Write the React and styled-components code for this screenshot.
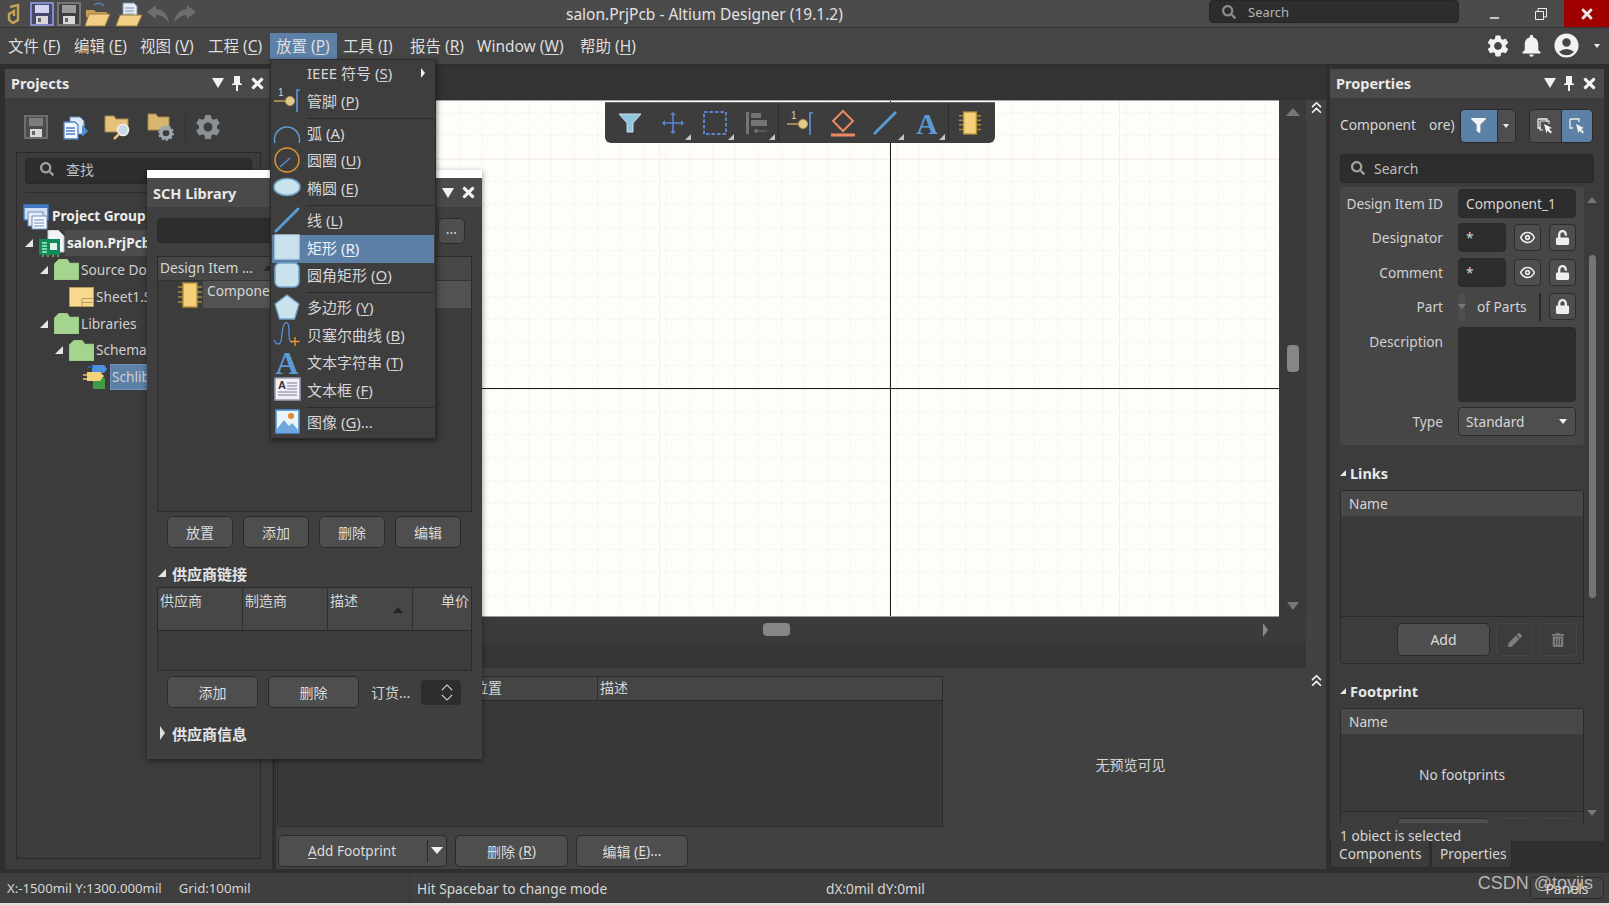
import React from "react";
import styled, { createGlobalStyle } from "styled-components";
import { FaSearch, FaLock, FaUnlock, FaTimes, FaPen, FaTrashAlt, FaFilter } from "react-icons/fa";
import { MdSettings, MdNotifications, MdAccountCircle } from "react-icons/md";
import { FiChevronsUp, FiEye } from "react-icons/fi";

const GlobalStyle = createGlobalStyle`
  html, body {
    margin: 0;
    padding: 0;
    background: #dcdcdc;
    overflow: hidden;
  }
  body {
    font-family: "Noto Sans", "Noto Sans CJK SC", sans-serif;
    font-size: 14px;
    color: #d6d6d6;
  }
  * { box-sizing: border-box; }
  u { text-underline-offset: 2px; }
`;

const App_ = styled.div`
  position: relative;
  width: 1609px;
  height: 903px;
  display: flex;
  flex-direction: column;
  background: #2f2f2f;
  overflow: hidden;
`;

/* ---- title bar ---- */
const TitleBar = styled.header`
  height: 28px;
  display: flex;
  align-items: center;
  background: #4b4b4b;
  border-bottom: 1px solid #353535;
  position: relative;
`;
const QuickIcons = styled.div`
  display: flex;
  align-items: center;
  gap: 3px;
  padding-left: 7px;
  width: 566px;
`;
const AppTitle = styled.div`
  width: 643px;
  font-size: 15.5px;
  color: #e2e2e2;
`;
const TitleSearch = styled.div`
  width: 250px;
  height: 23px;
  margin-bottom: 4px;
  display: flex;
  align-items: center;
  gap: 12px;
  padding-left: 12px;
  background: #2d2d2d;
  border: 1px solid #262626;
  border-radius: 4px;
  color: #b5b5b5;
  font-size: 13px;
`;
const WinButton = styled.div`
  width: ${(p) => p.$w}px;
  height: 27px;
  display: flex;
  align-items: center;
  justify-content: center;
  background: ${(p) => p.$bg || "transparent"};
  color: #e8e8e8;
`;
const WinControls = styled.div`
  margin-left: auto;
  display: flex;
`;

/* ---- menu bar ---- */
const MenuBar = styled.nav`
  height: 37px;
  display: flex;
  align-items: center;
  padding-left: 8px;
  background: #454545;
  border-bottom: 1px solid #2d2d2d;
`;
const MenuItem = styled.div`
  width: ${(p) => p.$w}px;
  height: 26px;
  margin-right: ${(p) => (p.$active ? 6 : 0)}px;
  padding: 0 ${(p) => (p.$active ? 6 : 0)}px;
  display: flex;
  align-items: center;
  font-size: 15.5px;
  white-space: nowrap;
  color: #dedede;
  background: ${(p) => (p.$active ? "#5d80a6" : "transparent")};
`;
const MenuRight = styled.div`
  margin-left: auto;
  display: flex;
  align-items: center;
  gap: 7px;
  padding-right: 9px;
  color: #f2f2f2;
`;
const CaretGap = styled.span`
  display: flex;
  margin-left: 6px;
`;

/* ---- small shared shapes ---- */
const Tri = styled.span`
  display: inline-block;
  width: 0;
  height: 0;
  flex: none;
  border-style: solid;
  border-color: transparent;
  ${(p) =>
    p.$dir === "down"
      ? `border-width: ${p.$s}px ${p.$w || p.$s * 0.85}px 0; border-top-color: ${p.$c || "#eee"};`
      : p.$dir === "up"
      ? `border-width: 0 ${p.$s * 0.9}px ${p.$s}px; border-bottom-color: ${p.$c || "#777"};`
      : p.$dir === "right"
      ? `border-width: ${p.$s}px 0 ${p.$s}px ${p.$s * 0.8}px; border-left-color: ${p.$c || "#ddd"};`
      : `border-width: 0 0 ${p.$s}px ${p.$s}px; border-bottom-color: ${p.$c || "#e6e6e6"};`}
`;
const IconGap = styled.span`
  display: flex;
  flex: none;
  margin-right: ${(p) => p.$m}px;
`;

/* ---- workspace ---- */
const Workspace = styled.main`
  height: 806px;
  display: flex;
  background: #2f2f2f;
`;
const Panel = styled.section`
  display: flex;
  flex-direction: column;
  background: #3c3c3c;
`;
const PanelHead = styled.div`
  flex: none;
  height: 29px;
  display: flex;
  align-items: center;
  padding: 0 ${(p) => p.$pr || 6}px 0 6px;
  background: #4a4a4a;
  font-size: 14.5px;
  font-weight: 700;
  color: #e8e8e8;
`;
const HeadIcons = styled.div`
  margin-left: auto;
  display: flex;
  align-items: center;
  gap: 6.5px;
  color: #f4f4f4;
`;

/* left dock */
const LeftDock = styled(Panel)`
  width: 267px;
  margin: 4px 4px 1px 5px;
`;
const DockTools = styled.div`
  height: 54px;
  display: flex;
  align-items: center;
  gap: 15px;
  padding: 5px 0 0 19px;
`;
const ToolSep = styled.span`
  width: 1px;
  height: 27px;
  margin: 0 -8px 0 -5px;
  background: #2f2f2f;
`;
const TreeBox = styled.div`
  margin: 0 11px 10px;
  height: 707px;
  padding: 5px 8px;
  border: 1px solid #2a2a2a;
  overflow: hidden;
`;
const SearchField = styled.div`
  height: ${(p) => p.$h || 26}px;
  display: flex;
  align-items: center;
  gap: 12px;
  padding: 0 0 3px 14px;
  background: #2d2d2d;
  border: 1px solid #282828;
  border-radius: 4px;
  color: #bdbdbd;
  font-size: 14px;
`;
const TreeRule = styled.div`
  height: 1px;
  margin-top: 8px;
  margin-bottom: 10px;
  background: #2c2c2c;
`;
const TreeList = styled.div`
  margin: 0 -8px;
`;
const TreeRow = styled.div`
  height: 26.8px;
  display: flex;
  align-items: center;
  padding-left: ${(p) => p.$indent}px;
  white-space: nowrap;
  font-size: 13.7px;
`;
const TreeArrow = styled.span`
  width: 14px;
  display: flex;
`;
const TreeLabel = styled.span`
  height: 26px;
  line-height: 24px;
  padding: 0 1px;
  font-weight: ${(p) => (p.$bold ? 700 : 400)};
  color: ${(p) => (p.$bold ? "#eee" : "#cfcfcf")};
  background: ${(p) => p.$bg || "transparent"};
  border: 1px solid ${(p) => p.$line || "transparent"};
`;

/* center */
const Center = styled.div`
  width: 1050px;
  display: flex;
  flex-direction: column;
`;
const DocStrip = styled.div`
  height: 35px;
  background: #333;
`;
const DocArea = styled.div`
  display: flex;
`;
const DocStack = styled.div`
  width: 1030px;
`;
const CanvasRow = styled.div`
  height: 517px;
  display: flex;
`;
const Canvas = styled.div`
  position: relative;
  width: 1003px;
  background: #fffdf9;
  border-top: 1px solid #aaa;
  border-bottom: 1px solid #999;
  overflow: hidden;
`;
const GridArt = styled.svg`
  display: block;
  width: 100%;
  height: 100%;
`;
const CanvasBar = styled.div`
  position: absolute;
  left: 329px;
  top: 1px;
  width: 390px;
  height: 41px;
  display: flex;
  align-items: center;
  padding-left: 4px;
  background: #3d3d3d;
  border-radius: 0 0 6px 6px;
  border-top: 1px solid #666;
`;
const Tool = styled.div`
  position: relative;
  width: 42.5px;
  height: 36px;
  display: flex;
  align-items: center;
  justify-content: center;
  border-right: ${(p) => (p.$sep ? "1px solid #2b2b2b" : "none")};
  ${(p) =>
    p.$corner
      ? `&::after {
          content: "";
          position: absolute;
          right: 3px;
          bottom: 1px;
          border-style: solid;
          border-width: 0 0 6px 6px;
          border-color: transparent transparent #c4c4c4 transparent;
        }`
      : ""}
`;
const VScroll = styled.div`
  width: 27px;
  padding: 8px 0 7px;
  display: flex;
  flex-direction: column;
  align-items: center;
  background: #3a3a3a;
`;
const HScroll = styled.div`
  height: 26px;
  display: flex;
  align-items: center;
  padding: 0 38px 0 487px;
  background: #3b3b3b;
  justify-content: space-between;
`;
const ScrollThumb = styled.div`
  background: #868686;
  border-radius: 4px;
  ${(p) => (p.$h ? `width: 12px; height: 27px; margin-top: ${p.$top}px; margin-bottom: auto;` : "width: 27px; height: 13px;")}
`;
const Splitter = styled.div`
  height: 25px;
  background: #363636;
`;
const Rail = styled.div`
  width: 20px;
  display: flex;
  justify-content: center;
  color: #f2f2f2;
  background: #424242;
  svg {
    margin-top: -2px;
  }
`;
const BottomPanel = styled.div`
  height: 201px;
  display: grid;
  grid-template-columns: 667px 1fr 20px;
  grid-template-rows: 166px 1fr;
  background: #414141;
`;
const ModelTable = styled.div`
  margin: 8px 0 7px 1px;
  display: flex;
  flex-direction: column;
  background: #393939;
  border: 1px solid #2b2b2b;
`;
const ModelHead = styled.div`
  height: 24px;
  display: grid;
  grid-template-columns: 193px 126px 1fr;
  align-items: center;
  background: #454545;
  border-bottom: 1px solid #2a2a2a;
  font-size: 14px;
`;
const HeadCell = styled.span`
  height: 100%;
  padding-left: 2px;
  line-height: 22px;
  border-left: ${(p) => (p.$first ? "none" : "1px solid #2f2f2f")};
`;
const Preview = styled.div`
  display: flex;
  align-items: center;
  justify-content: center;
  padding: 26px 0 0 12px;
  font-size: 14px;
`;
const BottomRail = styled(Rail)`
  grid-row: 1 / 3;
  grid-column: 3;
  padding-top: 5px;
  background: transparent;
`;
const ModelButtons = styled.div`
  display: flex;
  gap: 8px;
  padding: 1px 0 0 2px;
`;
const Btn = styled.div`
  width: ${(p) => p.$w}px;
  height: ${(p) => p.$h || 32}px;
  display: flex;
  align-items: center;
  justify-content: center;
  flex: none;
  background: ${(p) => (p.$off ? "transparent" : "#4e4e4e")};
  border: 1px solid ${(p) => (p.$off ? "#464646" : "#2a2a2a")};
  border-radius: 5px;
  color: ${(p) => (p.$off ? "#7c7c7c" : "#dcdcdc")};
  font-size: 14px;
  white-space: nowrap;
`;
const SplitBtn = styled(Btn)`
  justify-content: flex-start;
  padding-left: 29px;
  font-size: 13.6px;
`;
const SplitCaret = styled.span`
  width: 19px;
  height: 22px;
  margin-left: auto;
  padding-left: 3px;
  display: flex;
  align-items: center;
  border-left: 1px solid #2a2a2a;
`;

/* right dock */
const RightDock = styled.aside`
  width: 283px;
  padding: 4px 5px 0 4px;
  display: flex;
  flex-direction: column;
`;
const PropsPanel = styled(Panel)`
  height: 772px;
  overflow: hidden;
`;
const PropsTop = styled.div`
  height: 45px;
  display: flex;
  align-items: flex-end;
  padding: 0 11px 0 10px;
`;
const PropsName = styled.div`
  width: 121px;
  height: 34px;
  padding-bottom: 2px;
  display: flex;
  align-items: center;
  font-size: 13.7px;
`;
const PropsGap = styled.span`
  display: inline-block;
  width: 13px;
`;
const SegGroup = styled.div`
  height: 34px;
  display: flex;
  margin-right: ${(p) => p.$mr || 0}px;
  border: 1px solid #2a2a2a;
  border-radius: 5px;
  overflow: hidden;
`;
const Seg = styled.div`
  width: ${(p) => p.$w}px;
  display: flex;
  align-items: center;
  justify-content: center;
  color: #f4f4f4;
  background: ${(p) => (p.$on ? "#5d80a6" : "#4e4e4e")};
  border-left: ${(p) => (p.$line ? "1px solid #2d2d2d" : "none")};
`;
const PropsSearch = styled(SearchField)`
  margin: 11px 10px 4px;
  height: 29px;
  padding: 0 0 0 10px;
  gap: 9px;
`;
const PropsScroll = styled.div`
  height: 636px;
  display: flex;
  overflow: hidden;
`;
const PropsContent = styled.div`
  width: 254px;
  padding-left: 10px;
  flex: none;
`;
const FormArea = styled.div`
  padding: 2px 8px 9px 0;
  display: grid;
  grid-template-columns: 103px minmax(0, 1fr);
  column-gap: 15px;
  row-gap: 5.5px;
  background: #464646;
  border-radius: 4px;
`;
const FormLabel = styled.label`
  height: 29px;
  line-height: 29px;
  text-align: right;
  font-size: 13.7px;
  color: #d2d2d2;
`;
const FormControls = styled.div`
  height: ${(p) => p.$h || 29}px;
  display: flex;
  align-items: center;
  gap: ${(p) => (p.$tight ? 0 : 8)}px;
`;
const Field = styled.div`
  flex: ${(p) => (p.$w ? `0 0 ${p.$w}px` : 1)};
  height: 100%;
  padding-left: 7px;
  line-height: 27px;
  background: #2d2d2d;
  border: 1px solid #2a2a2a;
  border-radius: 4px;
  font-size: 13.7px;
`;
const IconBtn = styled.div`
  flex: none;
  width: 27px;
  height: 27px;
  display: flex;
  align-items: center;
  justify-content: center;
  background: #4e4e4e;
  border: 1px solid #2d2d2d;
  border-radius: 4px;
  color: #eee;
`;
const PartStub = styled.div`
  width: 7px;
  height: 28px;
  flex: none;
  margin-right: 12px;
  display: flex;
  align-items: center;
  justify-content: center;
  background: #4e4e4e;
  border-radius: 3px 0 0 3px;
`;
const PartText = styled.span`
  width: 62px;
  flex: none;
  font-size: 13.7px;
  color: #d2d2d2;
  white-space: nowrap;
`;
const PartBar = styled.span`
  width: 2px;
  height: 28px;
  flex: none;
  margin-right: 8px;
  background: #2a2a2a;
`;
const SelectBox = styled.div`
  flex: 1;
  height: 100%;
  padding: 0 8px 1px 7px;
  display: flex;
  align-items: center;
  justify-content: space-between;
  background: #4e4e4e;
  border: 1px solid #2c2c2c;
  border-radius: 4px;
  font-size: 13.7px;
`;
const SectionHead = styled.div`
  height: ${(p) => p.$h}px;
  display: flex;
  align-items: center;
  gap: 4px;
  margin-top: ${(p) => p.$mt}px;
  font-size: 14.5px;
  font-weight: 700;
  color: #e8e8e8;
`;
const DataTable = styled.div`
  width: 244px;
  height: ${(p) => p.$h}px;
  margin-top: 6px;
  display: flex;
  flex-direction: column;
  border: 1px solid #2a2a2a;
  border-radius: 3px;
  background: #3a3a3a;
`;
const DataHead = styled.div`
  height: 25px;
  flex: none;
  padding-left: 8px;
  line-height: 25px;
  background: #484848;
  font-size: 13.7px;
`;
const DataBody = styled.div`
  height: ${(p) => p.$h}px;
  flex: none;
  padding-top: 3px;
  display: flex;
  align-items: center;
  justify-content: center;
  border-bottom: 1px solid #2a2a2a;
  font-size: 13.7px;
`;
const DataFoot = styled.div`
  flex: 1;
  display: flex;
  gap: 6px;
  padding: 6px 0 0 56px;
  background: #3c3c3c;
`;
const PropTrack = styled.div`
  width: 16px;
  display: flex;
  flex-direction: column;
  align-items: center;
  padding: 10px 0 7px;
`;
const PropThumb = styled.div`
  width: 7px;
  height: 343px;
  margin: 52px 0 auto;
  background: #757575;
  border-radius: 4px;
`;
const PropsFoot = styled.div`
  height: 18px;
  padding-left: 10px;
  line-height: 25px;
  font-size: 13.7px;
  overflow: hidden;
  white-space: nowrap;
`;
const TabRow = styled.div`
  display: flex;
  gap: 1px;
`;
const DockTab = styled.div`
  width: ${(p) => p.$w}px;
  height: 27px;
  padding-left: 8px;
  line-height: 25px;
  background: #3c3c3c;
  border: 1px solid #2b2b2b;
  border-top: none;
  border-radius: 0 0 4px 4px;
  font-size: 13.7px;
`;

/* status bar */
const StatusBar = styled.footer`
  margin-top: 3px;
  height: 30px;
  display: flex;
  align-items: center;
  background: #3f3f3f;
  font-size: 13.7px;
  position: relative;
`;
const StatusCell = styled.div`
  width: ${(p) => p.$w}px;
  height: 100%;
  flex: none;
  padding-left: 7px;
  line-height: 31px;
  font-size: ${(p) => p.$fs || 13.7}px;
  border-right: ${(p) => (p.$line ? "1px solid #363636" : "none")};
  white-space: nowrap;
`;
const GridText = styled.span`
  margin-left: 17px;
`;
const PanelsBtn = styled(Btn)`
  margin-left: auto;
  margin-right: 5px;
  width: 74px;
  height: 22px;
  background: #444;
`;
const Watermark = styled.div`
  position: absolute;
  right: 16px;
  top: 0;
  color: rgba(205, 205, 205, 0.85);
  font-family: "Liberation Sans", sans-serif;
  font-size: 18px;
`;

/* SCH Library float */
const Floater = styled.div`
  position: absolute;
  left: 147px;
  top: 170px;
  width: 335px;
  height: 589px;
  display: flex;
  flex-direction: column;
  background: #3f3f3f;
  border-top: 8px solid #fff;
  box-shadow: 0 2px 6px rgba(0, 0, 0, 0.45);
`;
const FloatBody = styled.div`
  padding: 11px 10px 0;
  display: flex;
  flex-direction: column;
`;
const FilterRow = styled.div`
  display: flex;
  gap: 6px;
`;
const FilterInput = styled.div`
  width: 275px;
  height: 25px;
  background: #2d2d2d;
  border: 1px solid #2a2a2a;
  border-radius: 4px;
`;
const DotsBtn = styled(Btn)`
  width: 27px;
  height: 26px;
  padding-bottom: 5px;
`;
const CompTable = styled.div`
  height: 256px;
  margin-top: 12px;
  border: 1px solid #2b2b2b;
  background: #3c3c3c;
`;
const CompHead = styled.div`
  height: 24px;
  display: flex;
  align-items: center;
  padding: 0 0 2px 2px;
  gap: 10px;
  background: #474747;
  border-bottom: 1px solid #333;
  font-size: 13.7px;
`;
const CompRow = styled.div`
  height: 27px;
  display: flex;
  align-items: center;
  padding-left: 20px;
`;
const CompName = styled.span`
  flex: 1;
  height: 100%;
  margin-left: 1px;
  padding-left: 4px;
  line-height: 20px;
  background: #525252;
  font-size: 13.7px;
`;
const ButtonRow = styled.div`
  display: flex;
  align-items: center;
  gap: ${(p) => p.$gap || 10}px;
  margin-top: ${(p) => p.$mt || 5}px;
  padding-left: 10px;
`;
const FloatSection = styled.div`
  height: 22px;
  display: flex;
  align-items: center;
  gap: ${(p) => p.$gap || 6}px;
  margin-top: ${(p) => p.$mt}px;
  padding-left: ${(p) => p.$pl || 1}px;
  font-size: 15px;
  font-weight: 700;
  color: #e4e4e4;
`;
const VendorTable = styled.div`
  height: 84px;
  margin-top: 3px;
  border: 1px solid #2b2b2b;
  background: #3c3c3c;
`;
const VendorHead = styled.div`
  height: 43px;
  display: grid;
  grid-template-columns: 84px 85px 85px 1fr;
  background: #474747;
  border-bottom: 1px solid #2b2b2b;
`;
const VendorCell = styled.div`
  position: relative;
  padding: 2px 2px 0;
  font-size: 14px;
  line-height: 22px;
  text-align: ${(p) => p.$align || "left"};
  border-left: ${(p) => (p.$first ? "none" : "1px solid #303030")};
`;
const SortMark = styled.span`
  position: absolute;
  right: 9px;
  bottom: 17px;
  display: flex;
`;
const OrderLabel = styled.span`
  margin-left: 2px;
  font-size: 14px;
`;
const Stepper = styled.div`
  width: 40px;
  height: 25px;
  padding-left: 12px;
  display: flex;
  flex-direction: column;
  align-items: center;
  justify-content: center;
  gap: 3px;
  background: #2d2d2d;
  border-radius: 4px;
  margin-left: 1px;
`;

/* place menu */
const PlaceMenu = styled.div`
  position: absolute;
  left: 270px;
  top: 59px;
  width: 166px;
  padding: 1px;
  background: #3e3e3e;
  border: 1px solid #2b2b2b;
  box-shadow: 1px 2px 5px rgba(0, 0, 0, 0.5);
`;
const MenuRow = styled.div`
  height: 27.5px;
  padding-bottom: 4px;
  display: flex;
  align-items: center;
  font-size: 15px;
  white-space: nowrap;
  color: ${(p) => (p.$active ? "#eef2f6" : "#d6d6d6")};
  background: ${(p) => (p.$active ? "#5d80a6" : "transparent")};
`;
const MenuIcon = styled.span`
  width: 30px;
  height: 27px;
  margin-right: 5px;
  flex: none;
  display: flex;
  align-items: center;
  justify-content: center;
`;
const MenuSep = styled.div`
  height: 4.7px;
  display: flex;
  align-items: center;
  padding-left: 34px;
  &::after {
    content: "";
    flex: 1;
    height: 1px;
    background: #2b2b2b;
  }
`;
const SubArrow = styled.span`
  margin-left: 29px;
  display: flex;
`;

/* ---- drawings ---- */
const Floppy = ({ c = "#8f8f8f", hi = "#4a4a4a", top = "#9a9a9a", s = 24 }) => (
  <svg width={s} height={s} viewBox="0 0 24 24">
    <rect x="1" y="1" width="22" height="22" fill={hi} stroke={c} strokeWidth="1.8" />
    <rect x="5" y="3" width="14" height="8" fill={top} />
    <rect x="6" y="14" width="12" height="8" fill="#d8d8d8" />
    <rect x="8" y="16" width="3" height="4" fill="#666" />
  </svg>
);
const OpenFolder = () => (
  <svg width="27" height="26" viewBox="0 0 27 26">
    <path d="M2 9h8l2 2h11v5H2z" fill="#c59f55" />
    <path d="M1 25 5 13h21l-5 12z" fill="#f2cf86" stroke="#9a7b3d" />
    <path d="M10 4q6-4 10 1" fill="none" stroke="#5d80c6" strokeWidth="1.5" />
  </svg>
);
const DocFolder = () => (
  <svg width="28" height="26" viewBox="0 0 28 26">
    <path d="M8 2h11l3 3v12H8z" fill="#e8edf5" stroke="#7d8fb0" />
    <path d="M10 7h9M10 10h9M10 13h9" stroke="#7d8fb0" />
    <path d="M1 25 5 14h22l-5 11z" fill="#f2cf86" stroke="#9a7b3d" />
  </svg>
);
const Logo = () => (
  <svg width="14" height="22" viewBox="0 0 14 22">
    <path d="M3 4 11 2v15l-5 3-4-3V11l5-3v5" fill="none" stroke="#c6a253" strokeWidth="2.4" />
  </svg>
);
const UndoSvg = styled.svg`
  transform: ${(p) => (p.$flip ? "scaleX(-1)" : "none")};
`;
const UndoArrow = ({ flip }) => (
  <UndoSvg width="24" height="22" viewBox="0 0 24 22" $flip={flip}>
    <path d="M1 9 10 2v4q11 1 13 14Q18 12 10 12v4z" fill="#6e6e6e" />
  </UndoSvg>
);
const SmallPin = () => (
  <svg width="12" height="15" viewBox="0 0 12 15">
    <path d="M3 0h6v7l2 1v1H7v6H5V9H1V8l2-1z" fill="#f2f2f2" />
  </svg>
);
const GreenFolder = () => (
  <svg width="25" height="21" viewBox="0 0 25 21">
    <path d="M0 5 5 0h8l3 4h9v17H0z" fill="#a5d48f" stroke="#8ab478" strokeWidth=".6" />
  </svg>
);
const CopyDocs = () => (
  <svg width="26" height="26" viewBox="0 0 26 26">
    <path d="M7 3h10l4 4v13H7z" fill="#dfe9f5" stroke="#5e8ac4" />
    <path d="M1 8h11l3 3v14H1z" fill="#f2f6fb" stroke="#4f80c0" strokeWidth="1.3" />
    <path d="M3 14h9M3 17h9M3 20h9" stroke="#4f80c0" strokeWidth="1.4" />
    <path d="M19 11v12l6-6z" fill="#4f8fd8" />
  </svg>
);
const FolderSearch = () => (
  <svg width="28" height="28" viewBox="0 0 28 28">
    <path d="M1 3h9l2 3h12v13H1z" fill="#e7c27b" stroke="#a5864a" />
    <circle cx="19" cy="17" r="5.5" fill="#c8d9e6" stroke="#eee" strokeWidth="1.6" />
    <path d="m15 21-5 5" stroke="#e7c27b" strokeWidth="2.5" />
  </svg>
);
const FolderGear = () => (
  <svg width="28" height="28" viewBox="0 0 28 28">
    <path d="M1 1h8l2 3h11v13H1z" fill="#d9b670" stroke="#a5864a" />
    <circle cx="19" cy="20" r="5" fill="none" stroke="#9aa7ae" strokeWidth="3.4" />
    <circle cx="19" cy="20" r="7" fill="none" stroke="#9aa7ae" strokeWidth="1.8" strokeDasharray="2.2 2.2" />
  </svg>
);
const ProjectGroup = () => (
  <svg width="27" height="27" viewBox="0 0 27 27">
    <path d="M1 2h24v15H1z" fill="#cfe0f3" stroke="#3f78c4" strokeWidth="1.4" />
    <path d="M1 2h24v3H1z" fill="#3f78c4" />
    <path d="M5 9h15v14H5z" fill="#e6edf6" stroke="#6d8fb8" />
    <path d="M9 13h15v13H9z" fill="#f4f7fb" stroke="#6d8fb8" />
    <path d="M11 17h10M11 20h10M11 23h10" stroke="#6d8fb8" />
  </svg>
);
const PcbProject = () => (
  <svg width="26" height="27" viewBox="0 0 26 27">
    <path d="M9 0h10l6 6v16H9z" fill="#f0f3f8" stroke="#b8c0cc" />
    <rect x="0" y="9" width="21" height="16" fill="#0e8a5b" />
    <path d="M3 13h5M3 16h5M3 19h5M3 22h5" stroke="#a8f0c8" strokeWidth="1.5" />
    <rect x="11" y="13" width="7" height="7" fill="#dff5e8" />
    <path d="M4 25v2M9 25v2M14 25v2M19 25v2" stroke="#e8d27a" />
  </svg>
);
const SheetIcon = () => (
  <svg width="25" height="20" viewBox="0 0 25 20">
    <rect x="0.5" y="0.5" width="24" height="19" fill="#f6d98f" stroke="#b99a56" />
    <path d="M13 19.5v-8h11.5M13 15.5h11" stroke="#b99a56" fill="none" />
  </svg>
);
const SchLibIcon = () => (
  <IconGap $m={3}>
    <svg width="24" height="26" viewBox="0 0 24 26">
      <rect x="10" y="14" width="12" height="11" fill="#3e9a45" />
      <path d="M9 1h12l3 4-3 4H9z" fill="#4f8fe0" />
      <path d="M5 3h5" stroke="#2b5a9a" strokeWidth="2" />
      <path d="M4 8h13l4 4-4 5H4z" fill="#f3d27c" />
      <path d="M0 11h4M0 15h4" stroke="#c6a253" strokeWidth="2" />
    </svg>
  </IconGap>
);
const Chip = ({ w = 24, h = 26 }) => (
  <svg width={w} height={h} viewBox="0 0 24 26">
    <path d="M0 5h24M0 10h24M0 15h24M0 20h24" stroke="#a08a3a" strokeWidth="1.6" />
    <rect x="5" y="1" width="14" height="24" fill="#f6cf78" stroke="#b18f3d" strokeWidth="1.4" />
  </svg>
);
const PinIcon = () => (
  <svg width="28" height="28" viewBox="0 0 28 28">
    <text x="5" y="10" fontFamily="Liberation Sans, sans-serif" fontSize="10" fill="#d0d0d0">1</text>
    <path d="M1 15h14" stroke="#b89a58" strokeWidth="1.6" />
    <circle cx="17" cy="15" r="4.6" fill="#e3c98c" stroke="#b2935a" />
    <path d="M27 4h-3v22" fill="none" stroke="#5b8fd8" strokeWidth="1.7" />
  </svg>
);
const ArcIcon = () => (
  <svg width="28" height="28" viewBox="0 0 28 28">
    <path d="M2 25a12.5 12.5 0 1 1 24 0" fill="none" stroke="#5b9bd5" strokeWidth="1.5" />
  </svg>
);
const RingIcon = () => (
  <svg width="28" height="28" viewBox="0 0 28 28">
    <circle cx="14" cy="14" r="12" fill="none" stroke="#e8962e" strokeWidth="1.4" />
    <path d="M7 21 17 12" stroke="#5b8fd8" strokeWidth="1.2" />
  </svg>
);
const EllipseIcon = () => (
  <svg width="28" height="20" viewBox="0 0 28 20">
    <ellipse cx="14" cy="10" rx="13" ry="8.5" fill="#c9e2ec" stroke="#6fa3c8" strokeWidth="1.6" />
  </svg>
);
const LineIcon = ({ s = 28 }) => (
  <svg width={s} height={s} viewBox="0 0 28 28">
    <path d="M3 25 25 3" stroke="#5b9bd5" strokeWidth="3" strokeLinecap="round" />
  </svg>
);
const RectIcon = () => (
  <svg width="26" height="26" viewBox="0 0 26 26">
    <rect x="1" y="1" width="24" height="24" fill="#c9e2ec" stroke="#bcd6e2" strokeWidth="1.4" />
  </svg>
);
const RoundRectIcon = () => (
  <svg width="26" height="26" viewBox="0 0 26 26">
    <rect x="1" y="1" width="24" height="24" rx="5" fill="#c9e2ec" stroke="#6fa3c8" strokeWidth="1.6" />
  </svg>
);
const PentaIcon = () => (
  <svg width="26" height="26" viewBox="0 0 26 26">
    <path d="M13 1 25 10l-4.500 15h-15L1 10z" fill="#c9e2ec" stroke="#6fa3c8" strokeWidth="1.3" />
  </svg>
);
const BezierIcon = () => (
  <svg width="28" height="28" viewBox="0 0 28 28">
    <path d="M1 20q3 6 6 3c3-3 1-17 5-20 4-2 4 5 4 10 0 6 1 10 3 9" fill="none" stroke="#5b8fd8" strokeWidth="1.3" />
    <path d="M22 17v9M17.500 21.500h9" stroke="#e8962e" strokeWidth="1.4" />
  </svg>
);
const BigA = ({ s = 30 }) => (
  <svg width={s} height={s} viewBox="0 0 30 30">
    <text x="15" y="27" textAnchor="middle" fontFamily="Liberation Serif, serif" fontWeight="700" fontSize="32" fill="#5b9bd5">A</text>
  </svg>
);
const TextFrameIcon = () => (
  <svg width="27" height="24" viewBox="0 0 27 24">
    <rect x="1" y="1" width="25" height="22" fill="#f1f1f7" stroke="#9a9ab8" strokeWidth="1.5" />
    <text x="4" y="12" fontFamily="Liberation Sans, sans-serif" fontSize="11" fontWeight="700" fill="#333">A</text>
    <path d="M13 6h10M13 9h10M13 12h10M4 15h19M4 18h19" stroke="#7a7a9a" />
  </svg>
);
const PictureIcon = () => (
  <svg width="25" height="25" viewBox="0 0 25 25">
    <rect x="1" y="1" width="23" height="23" fill="#eaf4fb" stroke="#4f8fd8" strokeWidth="1.6" />
    <circle cx="16" cy="7" r="3" fill="#e8862e" />
    <path d="M2 20 9 11l5 6 3-3 7 8v1H2z" fill="#6fa8dc" />
  </svg>
);
const FunnelIcon = () => (
  <svg width="24" height="22" viewBox="0 0 24 22">
    <path d="M1 2h22l-8 9v9H9v-9z" fill="#8fc6dc" stroke="#c6e2ec" strokeWidth="1" />
  </svg>
);
const MoveCross = () => (
  <svg width="24" height="24" viewBox="0 0 24 24">
    <path d="M12 2v20M2 12h20" stroke="#5b84d0" strokeWidth="1.6" />
    <path d="M12 1l-3 3h6zM12 23l-3-3h6zM1 12l3-3v6zM23 12l-3-3v6z" fill="#5b84d0" />
  </svg>
);
const DashRect = () => (
  <svg width="24" height="24" viewBox="0 0 24 24">
    <rect x="1" y="1" width="22" height="22" fill="none" stroke="#5b84d0" strokeWidth="2" strokeDasharray="3.500 2" />
  </svg>
);
const AlignIcon = () => (
  <svg width="24" height="24" viewBox="0 0 24 24">
    <path d="M1 1h3v22H1z" fill="#747474" />
    <path d="M6 2h10v5H6zM6 9h16v6H6z" fill="#747474" />
    <path d="M9 20h13M9 20l3-2v4z" stroke="#747474" fill="#747474" />
  </svg>
);
const EraseIcon = () => (
  <svg width="26" height="28" viewBox="0 0 26 28">
    <path d="M13 2 23 12 13 22 3 12z" fill="none" stroke="#e98a62" strokeWidth="2" />
    <path d="M1 26h24" stroke="#e98a62" strokeWidth="3" />
  </svg>
);
const SelectCursor = ({ both }) => (
  <svg width="16" height="16" viewBox="0 0 16 16">
    <path d="M1 1h9v3M1 1v9h3" fill="none" stroke="#eee" strokeWidth="1.3" />
    {both && <path d="M3 3v9h3M3 3h9v3" fill="none" stroke="#eee" strokeWidth="1.1" />}
    <path d="M7 6 15 10l-3 1 3 3-1.500 1.500-3-3-1 3z" fill="#f2f2f2" />
  </svg>
);
const StepArrow = ({ up }) => (
  <svg width="12" height="7" viewBox="0 0 14 8">
    <path d={up ? "M1 7 7 1l6 6" : "M1 1l6 6 6-6"} fill="none" stroke="#dedede" strokeWidth="1.3" />
  </svg>
);
const CanvasGrid = () => (
  <GridArt>
    <defs>
      <pattern id="minor" width="23" height="23" patternUnits="userSpaceOnUse" x="0" y="12">
        <path d="M22.500 0V23M0 22.500H23" stroke="#f5f2ec" strokeDasharray="2.500 2.500" />
      </pattern>
      <pattern id="major" width="230" height="230" patternUnits="userSpaceOnUse" x="614" y="59">
        <path d="M229.500 0V230M0 229.500H230" stroke="#f3f0ea" />
      </pattern>
    </defs>
    <rect width="100%" height="100%" fill="url(#minor)" />
    <rect width="100%" height="100%" fill="url(#major)" />
    <path d="M614.500 0V517M0 287.500H1003" stroke="#1e1e1e" />
  </GridArt>
);

const MENU = [
  ["文件 (", "F", ")", 66],
  ["编辑 (", "E", ")", 66],
  ["视图 (", "V", ")", 68],
  ["工程 (", "C", ")", 62],
  ["放置 (", "P", ")", 67],
  ["工具 (", "I", ")", 67],
  ["报告 (", "R", ")", 67],
  ["Window (", "W", ")", 103],
  ["帮助 (", "H", ")", 60],
];

const PLACE = [
  [null, "IEEE 符号 (", "S", ")", "sub"],
  [<PinIcon />, "管脚 (", "P", ")", "sep"],
  [<ArcIcon />, "弧 (", "A", ")"],
  [<RingIcon />, "圆圈 (", "U", ")"],
  [<EllipseIcon />, "椭圆 (", "E", ")", "sep"],
  [<LineIcon />, "线 (", "L", ")"],
  [<RectIcon />, "矩形 (", "R", ")", "on"],
  [<RoundRectIcon />, "圆角矩形 (", "O", ")", "sep"],
  [<PentaIcon />, "多边形 (", "Y", ")"],
  [<BezierIcon />, "贝塞尔曲线 (", "B", ")"],
  [<BigA />, "文本字符串 (", "T", ")"],
  [<TextFrameIcon />, "文本框 (", "F", ")", "sep"],
  [<PictureIcon />, "图像 (", "G", ")..."],
];

const TREE = [
  { indent: 6, icon: <ProjectGroup />, label: "Project Group", bold: true },
  { indent: 8, arrow: true, icon: <PcbProject />, label: "salon.PrjPcb", bold: true, bg: "#4d4d4d" },
  { indent: 23, arrow: true, icon: <GreenFolder />, label: "Source Documents" },
  { indent: 52, icon: <SheetIcon />, label: "Sheet1.SchDoc" },
  { indent: 23, arrow: true, icon: <GreenFolder />, label: "Libraries" },
  { indent: 38, arrow: true, icon: <GreenFolder />, label: "Schematic Library" },
  { indent: 66, icon: <SchLibIcon />, label: "Schlib1.SchLib", bg: "#5d80a6", line: "#6d93bb" },
];

function FormSection() {
  return (
    <FormArea>
      <FormLabel>Design Item ID</FormLabel>
      <FormControls><Field>Component_1</Field></FormControls>
      <FormLabel>Designator</FormLabel>
      <FormControls>
        <Field $w={48}>*</Field>
        <IconBtn><FiEye size={15} strokeWidth={2.6} /></IconBtn>
        <IconBtn><FaUnlock size={15} /></IconBtn>
      </FormControls>
      <FormLabel>Comment</FormLabel>
      <FormControls>
        <Field $w={48}>*</Field>
        <IconBtn><FiEye size={15} strokeWidth={2.6} /></IconBtn>
        <IconBtn><FaUnlock size={15} /></IconBtn>
      </FormControls>
      <FormLabel>Part</FormLabel>
      <FormControls $tight>
        <PartStub><Tri $dir="down" $s={5} $w={4} $c="#777" /></PartStub>
        <PartText>of Parts</PartText>
        <PartBar />
        <IconBtn><FaLock size={15} /></IconBtn>
      </FormControls>
      <FormLabel>Description</FormLabel>
      <FormControls $h={75}><Field /></FormControls>
      <FormLabel>Type</FormLabel>
      <FormControls>
        <SelectBox>Standard<Tri $dir="down" $s={5} /></SelectBox>
      </FormControls>
    </FormArea>
  );
}

function PanelTools({ pin = true }) {
  return (
    <HeadIcons>
      <Tri $dir="down" $s={10} $w={6} $c="#f2f2f2" />
      {pin && <SmallPin />}
      <FaTimes size={17} />
    </HeadIcons>
  );
}

export default function App() {
  return (
    <App_>
      <GlobalStyle />
      <TitleBar>
        <QuickIcons>
          <IconGap $m={6}><Logo /></IconGap>
          <Floppy c="#8d92d8" hi="#45476b" top="#d3d5f0" />
          <Floppy c="#7c7c7c" hi="#3f3f3f" />
          <IconGap $m={1}><OpenFolder /></IconGap>
          <DocFolder />
          <UndoArrow />
          <UndoArrow flip />
        </QuickIcons>
        <AppTitle>salon.PrjPcb - Altium Designer (19.1.2)</AppTitle>
        <TitleSearch><FaSearch size={14} color="#8b8b8b" />Search</TitleSearch>
        <WinControls>
          <WinButton $w={46}>
            <svg width="10" height="10" viewBox="0 0 10 10"><path d="M0 9h9" stroke="#eee" strokeWidth="1.5" /></svg>
          </WinButton>
          <WinButton $w={46}>
            <svg width="12" height="12" viewBox="0 0 12 12"><path d="M.5 3.500h8v8h-8zM3 3.500V.5h8.500V9H8.500" fill="none" stroke="#eee" /></svg>
          </WinButton>
          <WinButton $w={45} $bg="#a00000"><FaTimes size={16} /></WinButton>
        </WinControls>
      </TitleBar>

      <MenuBar>
        {MENU.map(([a, k, b, w], i) => (
          <MenuItem key={k} $w={w} $active={i === 4}>
            {a}<u>{k}</u>{b}
          </MenuItem>
        ))}
        <MenuRight>
          <MdSettings size={26} />
          <MdNotifications size={27} />
          <MdAccountCircle size={29} />
          <CaretGap><Tri $dir="down" $s={4} /></CaretGap>
        </MenuRight>
      </MenuBar>

      <Workspace>
        <LeftDock>
          <PanelHead>
            Projects
            <PanelTools />
          </PanelHead>
          <DockTools>
            <Floppy c="#747474" hi="#4c4c4c" top="#7c7c7c" />
            <CopyDocs />
            <FolderSearch />
            <FolderGear />
            <ToolSep />
            <MdSettings size={30} color="#8a9196" />
          </DockTools>
          <TreeBox>
            <SearchField><FaSearch size={14} color="#a0a0a0" />查找</SearchField>
            <TreeRule />
            <TreeList>
              {TREE.map((t) => (
                <TreeRow key={t.label} $indent={t.indent}>
                  {t.arrow && <TreeArrow><Tri $s={8} /></TreeArrow>}
                  {t.icon}
                  <TreeLabel $bold={t.bold} $bg={t.bg} $line={t.line}>{t.label}</TreeLabel>
                </TreeRow>
              ))}
            </TreeList>
          </TreeBox>
        </LeftDock>

        <Center>
          <DocStrip />
          <DocArea>
            <DocStack>
              <CanvasRow>
                <Canvas>
                  <CanvasGrid />
                  <CanvasBar>
                    <Tool><FunnelIcon /></Tool>
                    <Tool $corner><MoveCross /></Tool>
                    <Tool $corner><DashRect /></Tool>
                    <Tool $corner $sep><AlignIcon /></Tool>
                    <Tool><PinIcon /></Tool>
                    <Tool><EraseIcon /></Tool>
                    <Tool $corner><LineIcon s={26} /></Tool>
                    <Tool $corner $sep><BigA s={28} /></Tool>
                    <Tool><Chip w={22} h={24} /></Tool>
                  </CanvasBar>
                </Canvas>
                <VScroll>
                  <Tri $dir="up" $s={8} />
                  <ScrollThumb $h $top={229} />
                  <Tri $dir="down" $s={8} $c="#777" />
                </VScroll>
              </CanvasRow>
              <HScroll>
                <ScrollThumb />
                <Tri $dir="right" $s={7} $c="#888" />
              </HScroll>
              <Splitter />
            </DocStack>
            <Rail><FiChevronsUp size={19} strokeWidth={2.2} /></Rail>
          </DocArea>

          <BottomPanel>
            <ModelTable>
              <ModelHead>
                <HeadCell $first>类型</HeadCell>
                <HeadCell>位置</HeadCell>
                <HeadCell>描述</HeadCell>
              </ModelHead>
            </ModelTable>
            <Preview>无预览可见</Preview>
            <BottomRail><FiChevronsUp size={19} strokeWidth={2.2} /></BottomRail>
            <ModelButtons>
              <SplitBtn $w={169}>
                <span><u>A</u>dd Footprint</span>
                <SplitCaret><Tri $dir="down" $s={7} $w={6} /></SplitCaret>
              </SplitBtn>
              <Btn $w={113}>删除 (<u>R</u>)</Btn>
              <Btn $w={112}>编辑 (<u>E</u>)...</Btn>
            </ModelButtons>
          </BottomPanel>
        </Center>

        <RightDock>
          <PropsPanel>
            <PanelHead>
              Properties
              <PanelTools />
            </PanelHead>
            <PropsTop>
              <PropsName>Component<PropsGap />ore)</PropsName>
              <SegGroup $mr={13}>
                <Seg $w={36} $on><FaFilter size={15} /></Seg>
                <Seg $w={18} $line><Tri $dir="down" $s={4} /></Seg>
              </SegGroup>
              <SegGroup>
                <Seg $w={32}><SelectCursor both /></Seg>
                <Seg $w={31} $on $line><SelectCursor /></Seg>
              </SegGroup>
            </PropsTop>
            <PropsSearch><FaSearch size={14} color="#a0a0a0" />Search</PropsSearch>
            <PropsScroll>
              <PropsContent>
                <FormSection />
                <SectionHead $mt={17} $h={22}><Tri $s={6} />Links</SectionHead>
                <DataTable $h={174}>
                  <DataHead>Name</DataHead>
                  <DataBody $h={101} />
                  <DataFoot>
                    <Btn $w={93} $h={33}>Add</Btn>
                    <Btn $w={37} $h={33} $off><FaPen size={14} /></Btn>
                    <Btn $w={38} $h={33} $off><FaTrashAlt size={14} /></Btn>
                  </DataFoot>
                </DataTable>
                <SectionHead $mt={16} $h={22}><Tri $s={6} />Footprint</SectionHead>
                <DataTable $h={174}>
                  <DataHead>Name</DataHead>
                  <DataBody $h={78}>No footprints</DataBody>
                  <DataFoot>
                    <Btn $w={93} $h={33}>Add</Btn>
                    <Btn $w={37} $h={33} $off><FaPen size={14} /></Btn>
                    <Btn $w={38} $h={33} $off><FaTrashAlt size={14} /></Btn>
                  </DataFoot>
                </DataTable>
              </PropsContent>
              <PropTrack>
                <Tri $dir="up" $s={6} />
                <PropThumb />
                <Tri $dir="down" $s={6} $c="#777" />
              </PropTrack>
            </PropsScroll>
            <PropsFoot>1 object is selected</PropsFoot>
          </PropsPanel>
          <TabRow>
            <DockTab $w={100}>Components</DockTab>
            <DockTab $w={81}>Properties</DockTab>
          </TabRow>
        </RightDock>
      </Workspace>

      <StatusBar>
        <StatusCell $w={410} $fs={13.2} $line>
          X:-1500mil Y:1300.000mil<GridText>Grid:100mil</GridText>
        </StatusCell>
        <StatusCell $w={409}>Hit Spacebar to change mode</StatusCell>
        <StatusCell $w={300}>dX:0mil dY:0mil</StatusCell>
        <PanelsBtn>Panels</PanelsBtn>
        <Watermark>CSDN @toyjis</Watermark>
      </StatusBar>

      <Floater>
        <PanelHead $pr={5}>
          SCH Library
          <PanelTools pin={false} />
        </PanelHead>
        <FloatBody>
          <FilterRow>
            <FilterInput />
            <DotsBtn>...</DotsBtn>
          </FilterRow>
          <CompTable>
            <CompHead>Design Item ...<Tri $dir="up" $s={6} $c="#2a2a2a" /></CompHead>
            <CompRow>
              <Chip />
              <CompName>Component_1</CompName>
            </CompRow>
          </CompTable>
          <ButtonRow $mt={4}>
            <Btn $w={66}>放置</Btn>
            <Btn $w={66}>添加</Btn>
            <Btn $w={66}>删除</Btn>
            <Btn $w={66}>编辑</Btn>
          </ButtonRow>
          <FloatSection $mt={14}><Tri $s={8} />供应商链接</FloatSection>
          <VendorTable>
            <VendorHead>
              <VendorCell $first>供应商</VendorCell>
              <VendorCell>制造商</VendorCell>
              <VendorCell>描述<SortMark><Tri $dir="up" $s={6} $c="#232323" /></SortMark></VendorCell>
              <VendorCell $align="right">单价</VendorCell>
            </VendorHead>
          </VendorTable>
          <ButtonRow>
            <Btn $w={91}>添加</Btn>
            <Btn $w={91}>删除</Btn>
            <OrderLabel>订货...</OrderLabel>
            <Stepper><StepArrow up /><StepArrow /></Stepper>
          </ButtonRow>
          <FloatSection $mt={14} $pl={3} $gap={7}><Tri $dir="right" $s={7} />供应商信息</FloatSection>
        </FloatBody>
      </Floater>

      <PlaceMenu>
        {PLACE.map(([icon, a, k, b, flag]) => (
          <React.Fragment key={k}>
            <MenuRow $active={flag === "on"}>
              <MenuIcon>{icon}</MenuIcon>
              <span>{a}<u>{k}</u>{b}</span>
              {flag === "sub" && <SubArrow><Tri $dir="right" $s={5} $c="#eee" /></SubArrow>}
            </MenuRow>
            {flag === "sep" && <MenuSep />}
          </React.Fragment>
        ))}
      </PlaceMenu>
    </App_>
  );
}
